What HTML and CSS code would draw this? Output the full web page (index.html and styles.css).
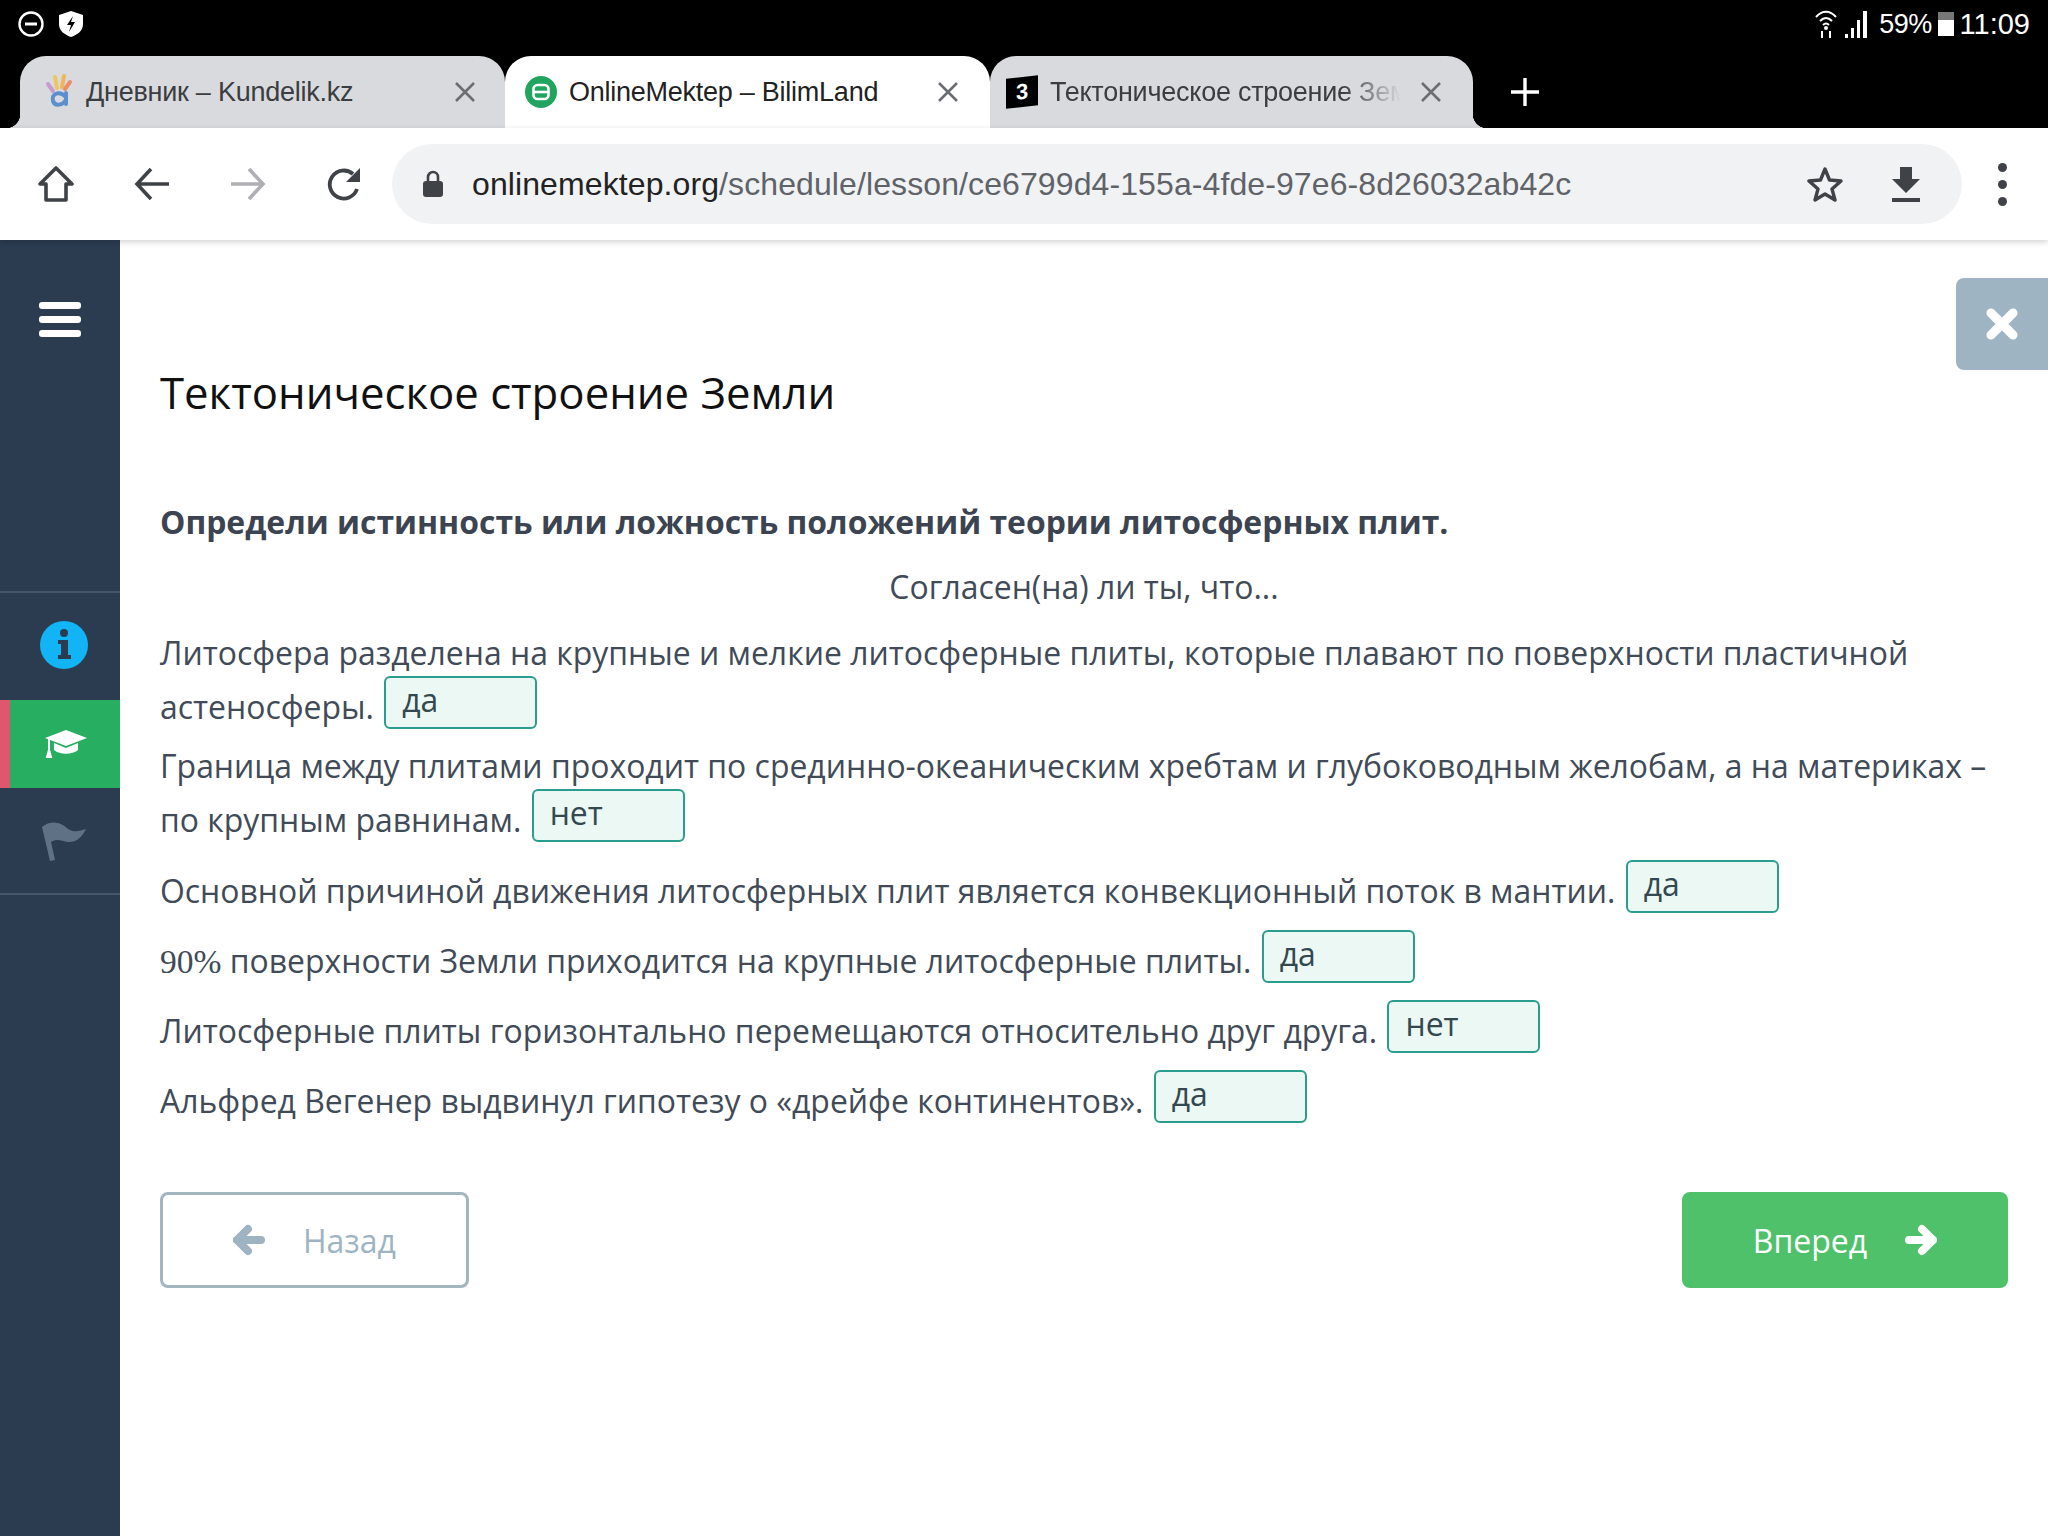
FILE: index.html
```html
<!DOCTYPE html>
<html lang="ru">
<head>
    <meta charset="UTF-8">
    <title>OnlineMektep - BilimLand</title>
    <link rel="stylesheet" href="styles.css">
</head>
<body>
    <div class="status-bar">
        <div class="status-left">
            <svg width="26" height="26" viewBox="0 0 26 26"><circle cx="13" cy="13" r="11.5" fill="none" stroke="#fff" stroke-width="2.4"/><rect x="7" y="11.5" width="12" height="3" fill="#fff"/></svg>
            <svg width="26" height="28" viewBox="0 0 26 28"><path d="M13 1 L25 5 V14 C25 21 19 25 13 27 C7 25 1 21 1 14 V5 Z" fill="#fff"/><path d="M15 6 L9 15 H13 L11 22 L17 12 H13 Z" fill="#000"/></svg>
        </div>
        <div class="status-right">
            <svg width="24" height="30" viewBox="0 0 24 30"><g fill="none" stroke="#fff" stroke-width="2"><path d="M2 8 C8 1 16 1 22 8"/><path d="M6 12 C10 8 14 8 18 12"/><path d="M9 16 C11 14 13 14 15 16"/></g><circle cx="12" cy="19" r="2" fill="#fff"/><path d="M8 22 V29 M16 22 V29" stroke="#fff" stroke-width="2"/></svg>
            <svg width="24" height="30" viewBox="0 0 24 30"><path d="M1 29 V25 H4 V29 Z M7 29 V19 H10 V29 Z M13 29 V11 H16 V29 Z M19 29 V2 H23 V29 Z" fill="#fff"/></svg>
            <span class="status-text status-percent">59%</span>
            <span class="battery"></span>
            <span class="status-text">11:09</span>
        </div>
    </div>

    <div class="tab-strip">
        <div class="tab tab-first">
            <svg class="favicon" width="30" height="36" viewBox="0 0 30 36"><g fill="none" stroke-width="4" stroke-linecap="round"><path d="M4 10 L9 17" stroke="#c99bd0"/><path d="M11 3 L13 14" stroke="#ecc85c"/><path d="M20 2 L18 13" stroke="#f2b65a"/><path d="M26 8 L21 15" stroke="#e88f6a"/><path d="M22 19 V30 M22 23 C15 16 7 20 9 27 C11 33 19 31 22 26" stroke="#5b8fce"/></g></svg>
            <span class="tab-title">Дневник – Kundelik.kz</span>
            <svg class="tab-close" width="22" height="22" viewBox="0 0 22 22"><path d="M2 2 L20 20 M20 2 L2 20" stroke="#6a6d72" stroke-width="2.6"/></svg>
        </div>
        <div class="tab tab-active">
            <svg class="favicon" width="32" height="32" viewBox="0 0 32 32"><circle cx="16" cy="16" r="16" fill="#21a45d"/><rect x="8.500" y="9" width="15" height="14" rx="4" fill="none" stroke="#fff" stroke-width="2.600"/><path d="M9 16 H23" stroke="#fff" stroke-width="2.600"/></svg>
            <span class="tab-title">OnlineMektep – BilimLand</span>
            <svg class="tab-close" width="22" height="22" viewBox="0 0 22 22"><path d="M2 2 L20 20 M20 2 L2 20" stroke="#6a6d72" stroke-width="2.6"/></svg>
        </div>
        <div class="tab tab-last">
            <span class="favicon-flag">3</span>
            <span class="tab-title tab-title-fade">Тектоническое строение Зем</span>
            <svg class="tab-close" width="22" height="22" viewBox="0 0 22 22"><path d="M2 2 L20 20 M20 2 L2 20" stroke="#6a6d72" stroke-width="2.6"/></svg>
        </div>
        <svg class="new-tab" width="30" height="30" viewBox="0 0 30 30"><path d="M15 1 V29 M1 15 H29" stroke="#fff" stroke-width="3.4"/></svg>
    </div>

    <div class="toolbar">
        <svg class="tool-icon" width="36" height="38" viewBox="0 0 36 38"><path d="M18 3 L34 19 H28 V35 H8 V19 H2 Z" fill="none" stroke="#3f4347" stroke-width="3.600" stroke-linejoin="round"/></svg>
        <svg class="tool-icon" width="36" height="34" viewBox="0 0 36 34"><path d="M17 2 L3 17 L17 32 M3 17 H35" fill="none" stroke="#3f4347" stroke-width="3.600"/></svg>
        <svg class="tool-icon" width="36" height="34" viewBox="0 0 36 34"><path d="M19 2 L33 17 L19 32 M33 17 H1" fill="none" stroke="#aeb0b3" stroke-width="3.600"/></svg>
        <svg class="tool-icon" width="36" height="36" viewBox="0 0 36 36"><path d="M31 23 A14 14 0 1 1 27 8" fill="none" stroke="#3f4347" stroke-width="3.800"/><path d="M34 2 V16 H20 Z" fill="#3f4347"/></svg>
        <div class="url-bar">
            <svg width="22" height="28" viewBox="0 0 22 28"><path d="M6 12 V7 A5 5 0 0 1 16 7 V12" fill="none" stroke="#3f4347" stroke-width="2.600"/><rect x="1" y="11" width="20" height="16" rx="3" fill="#3f4347"/></svg>
            <span class="url-text"><span class="url-host">onlinemektep.org</span>/schedule/lesson/ce6799d4-155a-4fde-97e6-8d26032ab42c</span>
            <svg class="url-star" width="38" height="36" viewBox="0 0 38 36"><path d="M19 3 L23.500 14 L35 15 L26 23 L29 34 L19 28 L9 34 L12 23 L3 15 L14.500 14 Z" fill="none" stroke="#3f4347" stroke-width="3.400" stroke-linejoin="round"/></svg>
            <svg class="url-download" width="30" height="36" viewBox="0 0 30 36"><path d="M9 1 H21 V13 H29 L15 27 L1 13 H9 Z" fill="#3f4347"/><rect x="1" y="32" width="28" height="4" fill="#3f4347"/></svg>
        </div>
        <div class="dots"><i></i><i></i><i></i></div>
    </div>

    <div class="main">
        <nav class="sidebar">
            <div class="side-top">
                <div class="burger"><i></i><i></i><i></i></div>
            </div>
            <div class="side-item side-item-info">
                <svg width="48" height="48" viewBox="0 0 48 48"><circle cx="24" cy="24" r="24" fill="#12b4f5"/><circle cx="24" cy="12" r="4" fill="#2b3c50"/><path d="M18 19 H28 V34 H31 V38 H18 V34 H21 V23 H18 Z" fill="#2b3c50"/></svg>
            </div>
            <div class="side-item side-item-active">
                <svg width="42" height="28" viewBox="0 0 42 28"><path d="M21 0 L42 8 L21 16 L0 8 Z" fill="#fff"/><path d="M9 13 L21 18 L33 13 V20 C27 25 15 25 9 20 Z" fill="#fff"/><path d="M4 9 V21 M2 27 L4 20 L6 27 Z" stroke="#fff" stroke-width="2" fill="#fff"/></svg>
            </div>
            <div class="side-item side-item-flag">
                <svg width="44" height="44" viewBox="0 0 44 44"><path d="M0 8 C10 0 20 4 26 10 C32 14 38 12 44 10 C40 18 34 24 26 23 C20 22 15 19 9 23 L13 41 L8 42 Z" fill="#5f7285"/></svg>
            </div>
        </nav>

        <main class="content">
            <h1 class="lesson-title">Тектоническое строение Земли</h1>
            <p class="task-title">Определи истинность или ложность положений теории литосферных плит.</p>
            <p class="task-center">Согласен(на) ли ты, что...</p>

            <p class="statement statement-long">Литосфера разделена на крупные и мелкие литосферные плиты, которые плавают по поверхности пластичной астеносферы. <span class="answer">да</span></p>
            <p class="statement statement-long">Граница между плитами проходит по срединно-океаническим хребтам и глубоководным желобам, а на материках – по крупным равнинам. <span class="answer">нет</span></p>
            <p class="statement">Основной причиной движения литосферных плит является конвекционный поток в мантии. <span class="answer">да</span></p>
            <p class="statement"><span class="digits">90%</span> поверхности Земли приходится на крупные литосферные плиты. <span class="answer">да</span></p>
            <p class="statement">Литосферные плиты горизонтально перемещаются относительно друг друга. <span class="answer">нет</span></p>
            <p class="statement">Альфред Вегенер выдвинул гипотезу о «дрейфе континентов». <span class="answer">да</span></p>

            <div class="nav-buttons">
                <button class="btn btn-back">
                    <svg width="32" height="32" viewBox="0 0 32 32"><path d="M15 5 L4 16 L15 27 M4 16 H28" fill="none" stroke="#9eb4c2" stroke-width="8" stroke-linecap="round" stroke-linejoin="round"/></svg>
                    Назад
                </button>
                <button class="btn btn-next">
                    Вперед
                    <svg width="32" height="32" viewBox="0 0 32 32"><path d="M17 5 L28 16 L17 27 M28 16 H4" fill="none" stroke="#fff" stroke-width="8" stroke-linecap="round" stroke-linejoin="round"/></svg>
                </button>
            </div>
        </main>

        <div class="close-lesson">
            <svg width="32" height="32" viewBox="0 0 32 32"><path d="M5 5 L27 27 M27 5 L5 27" stroke="#fff" stroke-width="9" stroke-linecap="round"/></svg>
        </div>
    </div>
</body>
</html>
```

FILE: styles.css
```css
* { box-sizing: border-box; }
html, body { margin: 0; height: 100%; }
body { display: flex; flex-direction: column; height: 1536px; overflow: hidden; background: #fff; font-family: "Open Sans", sans-serif; }

/* android status bar */
.status-bar { display: flex; justify-content: space-between; align-items: center; height: 56px; padding: 0 18px 8px; background: #000; color: #fff; }
.status-left { display: flex; align-items: center; gap: 14px; }
.status-right { display: flex; align-items: center; gap: 6px; }
.status-text { font-family: "Liberation Sans", sans-serif; font-size: 29px; }
.status-percent { margin-left: 5px; font-size: 27px; letter-spacing: -0.6px; }
.battery { width: 16px; height: 24px; background: linear-gradient(#777 35%, #fff 35%); }

/* tabs */
.tab-strip { display: flex; align-items: flex-end; height: 72px; padding-left: 20px; background: #000; }
.tab { position: relative; display: flex; align-items: center; width: 485px; height: 72px; padding: 0 29px 0 24px; background: #d9dade; border-radius: 26px 26px 0 0; color: #3b3d40; }
.tab-first::before, .tab-last::after { content: ""; position: absolute; bottom: 0; width: 14px; height: 14px; }
.tab-first::before { left: -14px; background: radial-gradient(circle at 0 0, #000 14px, #d9dade 14.5px); }
.tab-last::after { right: -14px; background: radial-gradient(circle at 100% 0, #000 14px, #d9dade 14.5px); }
.tab-active { background: #fff; color: #222; width: 485px; padding-left: 20px; padding-right: 31px; }
.tab-last { width: 483px; padding-left: 16px; padding-right: 36px; }
.favicon { flex: none; margin-right: 12px; }
.favicon-flag { flex: none; display: block; width: 32px; height: 30px; margin-right: 12px; background: #000; color: #fff; font: bold 22px/30px "Liberation Sans", sans-serif; text-align: center; transform: skewY(-6deg); }
.tab-title { flex: 1; white-space: nowrap; font-family: "Liberation Sans", sans-serif; font-size: 27px; letter-spacing: -0.25px; }
.tab-title-fade { -webkit-mask-image: linear-gradient(to right, #000 82%, transparent 98%); mask-image: linear-gradient(to right, #000 82%, transparent 98%); }
.tab-close { flex: none; margin-left: 12px; }
.new-tab { align-self: center; margin-left: 37px; }

/* toolbar */
.toolbar { position: relative; z-index: 2; display: flex; align-items: center; height: 112px; padding: 0 0 0 38px; background: #fff; box-shadow: 0 2px 6px rgba(0,0,0,0.18); }
.tool-icon { flex: none; margin-right: 60px; }
.toolbar .tool-icon:nth-child(4) { margin-right: 30px; }
.url-bar { display: flex; align-items: center; width: 1570px; height: 80px; padding: 0 41px 0 30px; border-radius: 40px; background: #f1f2f4; }
.url-text { flex: 1; margin-left: 28px; white-space: nowrap; font-family: "Liberation Sans", sans-serif; font-size: 32px; color: #5f6368; letter-spacing: 0.1px; }
.url-host { color: #222; }
.url-star { margin-right: 47px; }
.dots { display: flex; flex-direction: column; gap: 8px; margin-left: 36px; }
.dots i { display: block; width: 9px; height: 9px; border-radius: 50%; background: #3f4347; }

/* page */
.main { position: relative; display: flex; flex: 1; min-height: 0; }
.sidebar { flex: none; width: 120px; background: #2b3c50; }
.side-top { height: 353px; padding: 62px 0 0 39px; border-bottom: 2px solid #46566a; }
.burger { display: flex; flex-direction: column; gap: 7px; width: 42px; }
.burger i { display: block; height: 7px; border-radius: 3px; background: #fff; }
.side-item { display: flex; align-items: center; justify-content: center; height: 107px; padding-left: 8px; }
.side-item-info { padding-bottom: 4px; }
.side-item-active { height: 88px; padding-left: 12px; background: #27ae60; box-shadow: inset 10px 0 0 #e0566f; }
.side-item-flag { height: 107px; border-bottom: 2px solid #46566a; }

.content { flex: 1; min-width: 0; padding: 119px 40px 0 40px; color: #414b57; font-size: 31.930px; }
.lesson-title { margin: 0; font-size: 43.700px; font-weight: 400; line-height: 66px; color: #111; }
.task-title { margin: 64px 0 0; font-weight: 700; font-size: 31.900px; line-height: 66px; color: #3b4450; }
.task-center { margin: -1px 0 10px; line-height: 66px; text-align: center; }
.statement { margin: 16px 0 0; line-height: 46px; }
.statement-long { margin-top: 13px; }
.task-center + .statement { margin-top: 0; }
.statement-long + .statement:not(.statement-long) { margin-top: 17px; }
.answer { display: inline-block; width: 153px; height: 53px; margin-left: 2px; padding: 0 16px; border: 2.500px solid #2a9d8f; border-radius: 6px; background: #ebf8f3; color: #33494f; line-height: 43px; vertical-align: 7px; }
.digits { font-family: "Liberation Serif", serif; font-size: 33.500px; line-height: 1; }

.nav-buttons { display: flex; justify-content: space-between; margin-top: 68px; }
.btn { display: flex; align-items: center; justify-content: center; height: 96px; border-radius: 8px; font-family: "Open Sans", sans-serif; font-size: 32px; }
.btn-back { gap: 38px; width: 309px; border: 3px solid #a3b5bf; background: #fff; color: #9eb4c2; }
.btn-next { gap: 38px; width: 326px; border: none; background: #50c16b; color: #fff; }

.close-lesson { position: absolute; top: 38px; right: 0; display: flex; align-items: center; justify-content: center; width: 92px; height: 92px; border-radius: 8px 0 0 8px; background: #9eb4c2; }
```
